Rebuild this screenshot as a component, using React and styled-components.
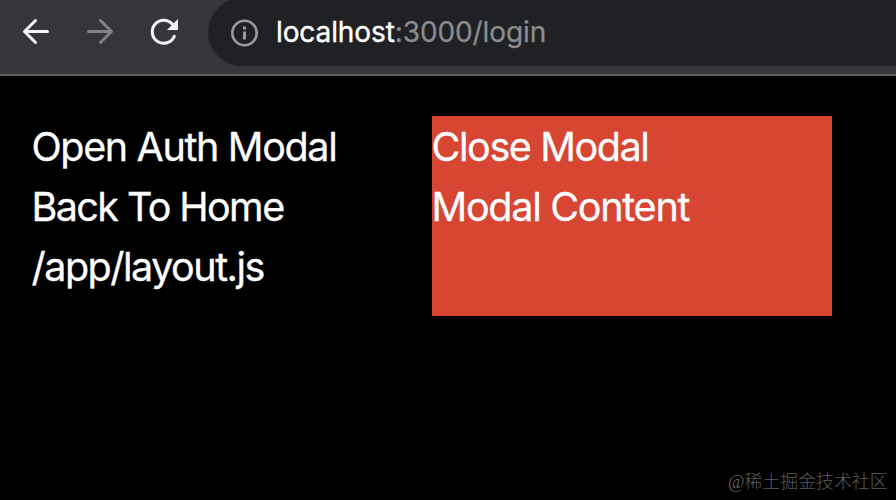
import React from "react";
import styled, { createGlobalStyle } from "styled-components";

const GlobalStyle = createGlobalStyle`
  * { box-sizing: border-box; }
  body {
    margin: 0;
    background: #000;
    color: #fff;
    font-family: Inter, "Liberation Sans", sans-serif;
    overflow: hidden;
  }
`;

const Browser = styled.div`
  display: flex;
  flex-direction: column;
  width: 896px;
  height: 500px;
  overflow: hidden;
`;

const Toolbar = styled.header`
  display: flex;
  flex: none;
  height: 76px;
  background: #35363a;
  border-bottom: 2px solid #5d5e60;
  overflow: hidden;
`;

const NavButtons = styled.nav`
  display: flex;
  width: 208px;
  padding-left: 4px;
  flex: none;
`;

const NavButton = styled.button`
  width: 64px;
  height: 64px;
  padding: 0;
  border: 0;
  background: none;
  color: ${(p) => (p.disabled ? "#818285" : "#f1f3f4")};

  svg { display: block; }
`;

const AddressBar = styled.div`
  display: flex;
  flex: 1;
  align-items: center;
  height: 68px;
  margin-top: -2px;
  padding-left: 20px;
  border-radius: 34px 0 0 34px;
  background: #202124;
`;

const InfoIcon = styled.svg`
  flex: none;
  margin-right: 15px;
`;

const Url = styled.span`
  color: #8b8c8e;
  font-size: 28px;
  line-height: 40px;
  letter-spacing: -0.1px;
  -webkit-text-stroke: 0.25px currentColor;
  white-space: nowrap;
`;

const Host = styled.span`
  color: #fff;
  -webkit-text-stroke: 0.4px currentColor;
`;

const Page = styled.main`
  display: flex;
  flex: 1;
  padding: 40px 32px 0;
`;

const Links = styled.div`
  width: 400px;
`;

const Modal = styled.section`
  width: 400px;
  height: 200px;
  background: #d74533;
`;

const Line = styled.div`
  height: 60px;
  padding-top: 1px;
  font-size: 39.5px;
  line-height: 60px;
  letter-spacing: ${(p) => p.$tracking}px;
  text-indent: -0.5px;
  -webkit-text-stroke: 0.3px currentColor;
  white-space: nowrap;
`;

const Watermark = styled.div`
  position: absolute;
  left: 728px;
  top: 469px;
  color: #5c5c5c;
  font: 300 17.9px/26px "Liberation Serif", "Noto Sans CJK SC", serif;
  white-space: nowrap;
`;

const stroke = { fill: "none", stroke: "currentColor", strokeWidth: 3, strokeLinecap: "round", strokeLinejoin: "round" };

export default function App() {
  return (
    <Browser>
      <GlobalStyle />
      <Toolbar>
        <NavButtons>
          <NavButton aria-label="Back">
            <svg width="64" height="64" {...stroke}>
              <path d="M43.5 31.5H20.5M31.5 20.5L20.5 31.5L31.5 42.5" />
            </svg>
          </NavButton>
          <NavButton aria-label="Forward" disabled>
            <svg width="64" height="64" {...stroke}>
              <path d="M20.5 31.5H43.5M32.5 20.5L43.5 31.5L32.5 42.5" />
            </svg>
          </NavButton>
          <NavButton aria-label="Reload">
            <svg width="64" height="64" {...stroke}>
              <path d="M42.3 36.4A11.5 11.5 0 1 1 40.5 24.3" />
              <path d="M46 19V30H35Z" fill="currentColor" stroke="none" />
            </svg>
          </NavButton>
        </NavButtons>
        <AddressBar>
          <InfoIcon width="33" height="33" viewBox="0 0 33 33">
            <circle cx="16.5" cy="17" r="12.2" fill="none" stroke="#9a9b9e" strokeWidth="2.6" />
            <path d="M15 10.5h3v3h-3zM15 15.5h3v8h-3z" fill="#9a9b9e" />
          </InfoIcon>
          <Url><Host>localhost</Host>:3000/login</Url>
        </AddressBar>
      </Toolbar>
      <Page>
        <Links>
          <Line $tracking={-1.35}>Open Auth Modal</Line>
          <Line $tracking={-1.6}>Back To Home</Line>
          <Line $tracking={-1.5}>/app/layout.js</Line>
        </Links>
        <Modal>
          <Line $tracking={-1.4}>Close Modal</Line>
          <Line $tracking={-1.27}>Modal Content</Line>
        </Modal>
      </Page>
      <Watermark>@稀土掘金技术社区</Watermark>
    </Browser>
  );
}
